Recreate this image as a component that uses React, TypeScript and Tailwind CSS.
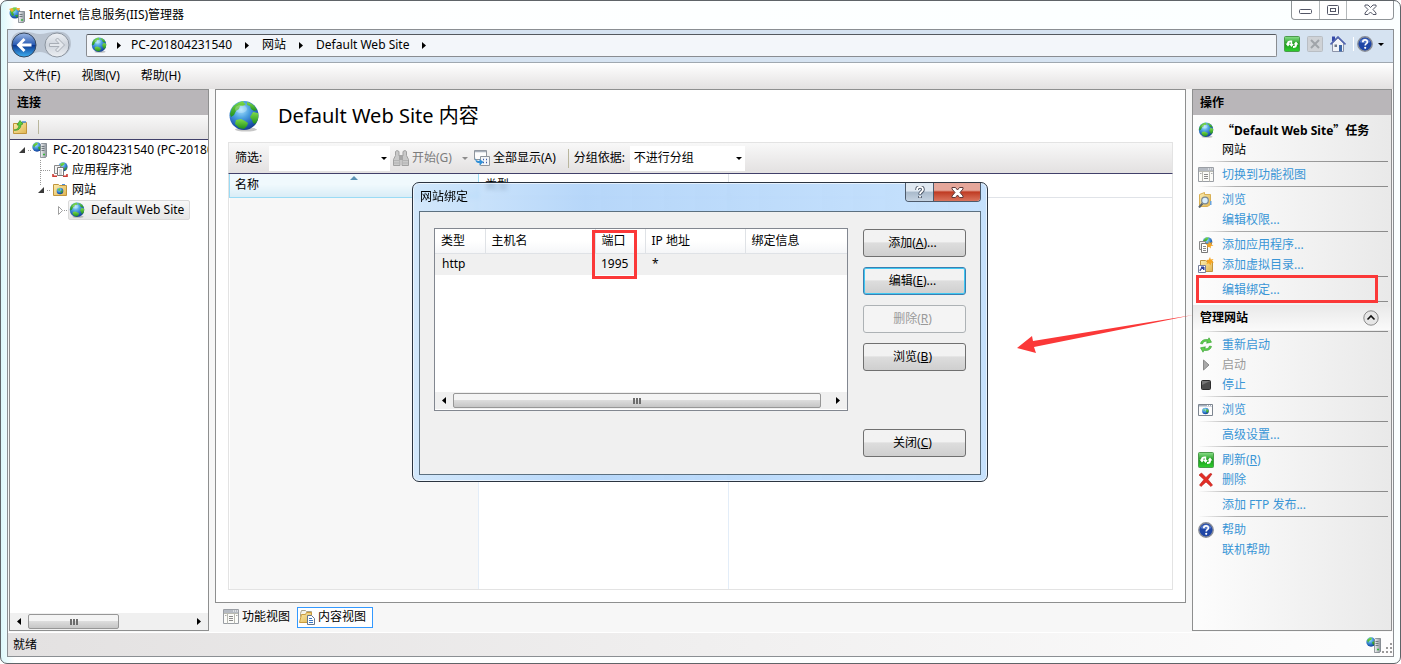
import type { ReactNode } from 'react';

type IconProps = { size?: number };

type Action = {
  label: ReactNode;
  icon?: ReactNode;
  disabled?: boolean;
};

// gradients shared by all the icons below
function IconDefs() {
  return (
    <svg width="0" height="0" className="absolute" aria-hidden="true">
      <defs>
        <radialGradient id="sea" cx="0.4" cy="0.3" r="0.75">
          <stop offset="0" stopColor="#a8e4ff" />
          <stop offset="0.4" stopColor="#4a9fe0" />
          <stop offset="0.8" stopColor="#1c55b0" />
          <stop offset="1" stopColor="#173a85" />
        </radialGradient>
        <linearGradient id="land" x1="0" y1="0" x2="0" y2="1">
          <stop offset="0" stopColor="#7fdc4a" />
          <stop offset="1" stopColor="#1f8f1c" />
        </linearGradient>
        <linearGradient id="folder" x1="0" y1="0" x2="1" y2="1">
          <stop offset="0" stopColor="#fdeeb0" />
          <stop offset="1" stopColor="#e0b450" />
        </linearGradient>
        <linearGradient id="refresh" x1="0" y1="0" x2="0" y2="1">
          <stop offset="0" stopColor="#8be08b" />
          <stop offset="0.5" stopColor="#1c9a1c" />
          <stop offset="1" stopColor="#2fd02f" />
        </linearGradient>
        <linearGradient id="back" x1="0" y1="0" x2="0" y2="1">
          <stop offset="0" stopColor="#9db9e4" />
          <stop offset="0.48" stopColor="#2a5cb4" />
          <stop offset="0.52" stopColor="#0d3a94" />
          <stop offset="1" stopColor="#3fb2f2" />
        </linearGradient>
        <linearGradient id="forward" x1="0" y1="0" x2="0" y2="1">
          <stop offset="0" stopColor="#eef1f5" />
          <stop offset="0.5" stopColor="#cfd5dd" />
          <stop offset="1" stopColor="#eceff3" />
        </linearGradient>
        <linearGradient id="server" x1="0" y1="0" x2="1" y2="0">
          <stop offset="0" stopColor="#f4f5f6" />
          <stop offset="1" stopColor="#8d959c" />
        </linearGradient>
      </defs>
    </svg>
  );
}

function Globe({ size = 16 }: IconProps) {
  return (
    <svg width={size} height={size} viewBox="0 0 32 32" className="shrink-0">
      <ellipse cx="18" cy="29.5" rx="11" ry="2" fill="#000" opacity="0.22" />
      <circle cx="16" cy="15.5" r="14.5" fill="url(#sea)" />
      <path d="M4 8C7 4 11 2 15 1l1 2 2 1-3 2-3 0-1 3-3 2-2 4-3 2-1-3z" fill="url(#land)" />
      <path d="M19 2c5 1 8 4 10 8l-3 1-3-2-1-3-3-1z" fill="url(#land)" />
      <path d="M25 12l5 1c1 4 0 8-3 11l-2-1-1-3-2-3z" fill="url(#land)" />
      <path d="M8 20l5-1 4 2 3 2-1 3-3 3-5-1-4-4z" fill="url(#land)" />
      <ellipse cx="13" cy="9" rx="6" ry="4" fill="#fff" opacity="0.25" />
    </svg>
  );
}

function ServerIcon({ size = 16 }: IconProps) {
  return (
    <svg width={size} height={size} viewBox="0 0 16 16" className="shrink-0">
      <circle cx="5" cy="5" r="4.7" fill="url(#sea)" />
      <path d="M1 3l3-2.5 2 .5-1 2-2 1-1 2zM6 5l3-1v3L7 8z" fill="url(#land)" />
      <path d="M8.500 2.500l1-1h5v13l-1 1h-5z" fill="url(#server)" stroke="#6c747b" strokeWidth="0.7" />
      <path d="M9.500 4.500h3M9.500 6.500h3M9.500 8.500h3" stroke="#5b636b" strokeWidth="0.8" />
      <path d="M11 12.500h2" stroke="#35b53a" strokeWidth="1.500" />
    </svg>
  );
}

function ManagerIcon() {
  return (
    <svg width="16" height="16" viewBox="0 0 16 16" className="shrink-0">
      <circle cx="6" cy="6" r="5.500" fill="url(#sea)" />
      <path d="M1 4l3-3.500h4L6 4 4 5 5 8 3 9zM6 8l3 0-1 3z" fill="url(#land)" />
      <path d="M0 2l3-1 2 2-2 2zM7 1l4 0-1 3-2-1z" fill="#f2b234" />
      <path d="M9.500 5.500l1-1h5v10l-1 1h-5z" fill="url(#server)" stroke="#6c747b" strokeWidth="0.7" />
      <path d="M10.500 7.500h3M10.500 9.500h3" stroke="#5b636b" strokeWidth="0.8" />
      <path d="M12 13h2" stroke="#35b53a" strokeWidth="1.500" />
    </svg>
  );
}

function AppPoolIcon() {
  return (
    <svg width="16" height="16" viewBox="0 0 16 16" className="shrink-0">
      <circle cx="11" cy="4.800" r="4.600" fill="url(#sea)" />
      <path d="M8 2l3-1.500 2 1-2 2-2 1zM12 7l3-2.500-1 4z" fill="url(#land)" />
      <path d="M2.500 3.500h6v8h-6z" fill="#f3f3f3" stroke="#8a8a8a" />
      <path d="M5.500 5.500h6v8h-6z" fill="#fff" stroke="#777" />
      <path d="M7 8h3M7 10h3M7 12h3" stroke="#999" strokeWidth="0.800" />
      <path d="M1 12v2.200h4M15 12v2.200h-4" fill="none" stroke="#cc3a33" strokeWidth="1.600" />
    </svg>
  );
}

function SitesIcon() {
  return (
    <svg width="16" height="16" viewBox="0 0 16 16" className="shrink-0">
      <path d="M1.500 2.500h5l1 1h7v10h-13z" fill="url(#folder)" stroke="#c0943c" />
      <path d="M10 2.500h3" stroke="#4b8fd8" />
      <circle cx="8" cy="9" r="3.300" fill="url(#sea)" />
      <path d="M5.500 8l2-2 1 1-1 2zM8.500 9l2-1v2l-1.500 1.500z" fill="url(#land)" />
    </svg>
  );
}

function FolderUpIcon() {
  return (
    <svg width="16" height="16" viewBox="0 0 16 16" className="shrink-0">
      <path d="M1.500 4.500h5l1-1h7v11h-13z" fill="url(#folder)" stroke="#c0943c" />
      <path d="M10 3h4" stroke="#4b8fd8" strokeWidth="1.500" />
      <path d="M2 11c3 0 5-2 5-5H5l3-4.500L11 5 9 5.500c0 4-3 6.500-7 5.500z" fill="#5ccf3f" stroke="#2e8f22" strokeWidth="0.700" />
    </svg>
  );
}

function GridIcon() {
  return (
    <svg width="16" height="16" viewBox="0 0 16 16" className="shrink-0">
      <path d="M0.500 0.500h15v14h-15z" fill="#fbfbf8" stroke="#9a9ea4" />
      <path d="M1 1h14v3H1z" fill="#b5bac2" />
      <path d="M10 2h1M12 2h1M14 2h1" stroke="#fff" />
      <path d="M1 4.500h14M4.500 4.500v10M11.500 4.500v10" stroke="#b9bab2" />
      <path d="M2 6.500h1.500M13 6.500h1.500" stroke="#aaa" />
      <path d="M6 7.500h4M6 9.500h4M6 11.500h4" stroke="#8a8a8a" />
    </svg>
  );
}

function ContentIcon() {
  return (
    <svg width="16" height="16" viewBox="0 0 16 16" className="shrink-0">
      <path d="M1.500 4.500l1-3h4l1 1h5v5h-11z" fill="#f4f4ee" stroke="#a9a48d" />
      <path d="M0.500 13.500l2-8h4l1-2h5v10z" fill="url(#folder)" stroke="#c99b3e" />
      <path d="M8.500 6.500h4l3 3v6h-7z" fill="#fff" stroke="#64758c" />
      <path d="M10 9.500h3M10 11.500h4M10 13.500h4" stroke="#3b78c4" />
    </svg>
  );
}

function ExploreIcon() {
  return (
    <svg width="16" height="16" viewBox="0 0 16 16" className="shrink-0">
      <path d="M1.500 2.500l5-2v2h6v10l-3 2h-8z" fill="url(#folder)" stroke="#d8b055" />
      <path d="M12 9h1.500v4H12z" fill="#6aa3dc" />
      <path d="M4.500 11.500L1 15.500" stroke="#5c6670" strokeWidth="2" />
      <circle cx="7" cy="8.500" r="3.300" fill="#d9efff" stroke="#7a8894" strokeWidth="1.200" />
    </svg>
  );
}

function AddAppIcon() {
  return (
    <svg width="16" height="16" viewBox="0 0 16 16" className="shrink-0">
      <circle cx="9.500" cy="5" r="4.800" fill="url(#sea)" />
      <path d="M5 4l3-3.500h3l-2 3-3 2z" fill="url(#land)" />
      <path d="M1.500 4.500h6v8h-6z" fill="#eee" stroke="#8a8a8a" />
      <path d="M3.500 6.500h6v9h-6z" fill="#fff" stroke="#777" />
      <path d="M5 9.500h3M5 11.500h3M5 13.500h3" stroke="#888" />
      <path d="M11 3.500l.8 2.500 2.700-1-1.300 2.300 2.300 1.200-2.700.5 0 2.500-1.800-1.700-2.200 1.200.9-2.500L7.500 7.200l2.700-.3z" fill="#f6a521" />
    </svg>
  );
}

function AddVirtualDirIcon() {
  return (
    <svg width="16" height="16" viewBox="0 0 16 16" className="shrink-0">
      <path d="M2.500 3.500h5l1 1h6v10h-12z" fill="url(#folder)" stroke="#c0943c" />
      <path d="M12 0l.8 2.500L15.500 2 14 4l2 1.500-2.700.3L12.500 8.500 11 6.200 8.500 7l1-2.500L8 3l2.700-.3z" fill="#f6a521" />
      <path d="M0.500 8.500h7v7h-7z" fill="#fff" stroke="#777f9b" />
      <path d="M2 14c0-2 1-3 3-3M3 10h3v3z" fill="#2c3f9e" stroke="#2c3f9e" />
    </svg>
  );
}

function RestartIcon() {
  return (
    <svg width="16" height="16" viewBox="0 0 16 16" className="shrink-0">
      <path d="M2.500 6.500C3.500 3 7 1.800 10 2.800L11 .8l2.500 4.400-5 1 .9-1.700C7 3.800 5 4.800 4.500 7z" fill="#5fcf4b" stroke="#2f9a2c" strokeWidth="0.600" />
      <path d="M13.500 9.500c-1 3.500-4.500 4.700-7.500 3.700l-1 2-2.500-4.400 5-1-.9 1.700c2.400.7 4.400-.3 4.900-2.500z" fill="#5fcf4b" stroke="#2f9a2c" strokeWidth="0.600" />
    </svg>
  );
}

function StartIcon() {
  return (
    <svg width="16" height="16" viewBox="0 0 16 16" className="shrink-0">
      <path d="M5.500 3L11 8l-5.500 5z" fill="#a9a9a9" stroke="#8a8a8a" />
    </svg>
  );
}

function StopIcon() {
  return (
    <svg width="16" height="16" viewBox="0 0 16 16" className="shrink-0">
      <rect x="3.500" y="3.500" width="9" height="9" rx="1" fill="#4c4c4c" stroke="#2c2c2c" />
      <path d="M4 8l8-4H4z" fill="#777" />
    </svg>
  );
}

function BrowseIcon() {
  return (
    <svg width="16" height="16" viewBox="0 0 16 16" className="shrink-0">
      <path d="M0.500 2.500h14v11h-14z" fill="#fdfdfd" stroke="#7d858f" />
      <path d="M1 3h13v1.500H1z" fill="#a5afbd" />
      <path d="M9 3.500h1M11 3.500h1M13 3.500h1" stroke="#fff" />
      <circle cx="7.500" cy="9" r="3.300" fill="url(#sea)" />
      <path d="M8 7l2.500 1v2l-2 1zM5 8l1.500-1 .5 2z" fill="url(#land)" />
    </svg>
  );
}

function RefreshIcon() {
  return (
    <svg width="16" height="16" viewBox="0 0 16 16" className="shrink-0">
      <rect x="0.500" y="0.500" width="15" height="15" rx="1" fill="url(#refresh)" stroke="#4c9a4c" />
      <path d="M4 10.500L1.500 7.500H3c0-2 1-3 4-3v2c-1.500 0-2 .2-2 1h1.500z" fill="#fff" />
      <path d="M7.500 4.500v5M6 8l1.500 2L9 8" fill="none" stroke="#fff" strokeWidth="1.300" />
      <path d="M12 5.500l2.500 3H13c0 2.500-1 3.500-4 3.500v-2c1.500 0 2-.4 2-1.500H9.500z" fill="#fff" />
    </svg>
  );
}

function StopLoadIcon() {
  return (
    <svg width="16" height="16" viewBox="0 0 16 16" className="shrink-0">
      <rect x="0.500" y="0.500" width="15" height="15" rx="1" fill="#cfd2d6" stroke="#b9bec4" />
      <path d="M4 4l8 8M12 4l-8 8" stroke="#a0a4a9" strokeWidth="2" />
    </svg>
  );
}

function HomeIcon() {
  return (
    <svg width="16" height="16" viewBox="0 0 16 16" className="shrink-0">
      <path d="M2 0.500h3v5H2z" fill="#3449a8" />
      <path d="M2.500 7v8.500h11V7L8 2z" fill="#f1f3f7" stroke="#8d94a8" />
      <path d="M0.500 8.500L8 1l7.500 7.500" fill="none" stroke="#5265b0" strokeWidth="1.600" />
      <path d="M9 9h3v6.500H9z" fill="#3c66a8" />
      <path d="M4.500 8.500h2.500v2.500H4.500z" fill="#6b7688" />
    </svg>
  );
}

function HelpIcon() {
  return (
    <svg width="16" height="16" viewBox="0 0 16 16" className="shrink-0">
      <circle cx="8" cy="8" r="7.200" fill="#1f46a6" stroke="#8b8f98" strokeWidth="1.400" />
      <path d="M2.500 6a6 6 0 0 1 11 0c-3 1.500-8 1.500-11 0z" fill="#6d8fd6" opacity="0.700" />
      <path d="M5.800 6.200c0-3 4.600-3 4.600-.2 0 1.700-2.200 1.700-2.200 3.500" fill="none" stroke="#fff" strokeWidth="1.700" />
      <circle cx="8.200" cy="11.800" r="1.100" fill="#fff" />
    </svg>
  );
}

function DeleteIcon() {
  return (
    <svg width="16" height="16" viewBox="0 0 16 16" className="shrink-0">
      <path d="M1 3l2.500-2 4.500 4.500L12 1.500 14 2l-4 5.500 4.500 5.500-1.500 1.500L8 10l-5 4.500L1.500 13 6 7.500z" fill="#e32d25" stroke="#b51a14" strokeWidth="0.600" />
    </svg>
  );
}

function BinocularsIcon() {
  return (
    <svg width="16" height="16" viewBox="0 0 16 16" className="shrink-0">
      <path d="M2.500 1.500L4 .5l2 1v4l1 1v9H.500v-6l2-4zM10 1.500l2-1 1.500 1v4l2 4v6H9v-9l1-1z" fill="#c9c9c9" stroke="#a1a1a1" />
      <path d="M6 5h4v5H6z" fill="#a6a6a6" />
      <path d="M1 10.500h5.500M9.500 10.500H15M1 13h5.500M9.500 13H15" stroke="#b3b3b3" />
    </svg>
  );
}

function ShowAllIcon() {
  return (
    <svg width="16" height="16" viewBox="0 0 16 16" className="shrink-0">
      <path d="M0.500 0.500h12v9h-12z" fill="#fdfdfd" stroke="#8f959c" />
      <path d="M1 1.500h11" stroke="#a9b1bc" strokeWidth="1.500" />
      <path d="M6.500 6.500h9v9h-9z" fill="#f3f5f8" stroke="#8f959c" />
      <path d="M9 9.500h1M12 9.500h1M9 12.500h1M12 12.500h1" stroke="#3d5fa8" strokeWidth="1.500" />
      <path d="M1.500 7c0 3 1 4 4 4V9l4 3-4 3.500V13C2 13 1 11 1.500 7z" fill="#2f8fd6" />
    </svg>
  );
}

function CollapseIcon() {
  return (
    <svg width="16" height="16" viewBox="0 0 16 16" className="shrink-0">
      <circle cx="8" cy="8" r="7.200" fill="#e6e6e6" stroke="#8b8b8b" />
      <path d="M4.500 9.500L8 6l3.500 3.500" fill="none" stroke="#111" strokeWidth="1.600" />
    </svg>
  );
}

function Caret({ dir, gray = false }: { dir: 'right' | 'left' | 'down'; gray?: boolean }) {
  const paths = { right: 'M2 1l4 3.500L2 8z', left: 'M6 1L2 4.500 6 8z', down: 'M1 3h6L4 6z' };
  return (
    <svg width="8" height="9" viewBox="0 0 8 9" className="shrink-0">
      <path d={paths[dir]} fill={gray ? '#8c8c8c' : '#000'} />
    </svg>
  );
}

function ScrollBar({ thumb, name }: { thumb: string; name: string }) {
  return (
    <div className="flex h-[17px] shrink-0 items-center bg-[#f0f0f0]">
      <button aria-label={`${name} left`} className="flex h-full w-[18px] items-center justify-center">
        <Caret dir="left" />
      </button>
      <div className="flex h-full flex-1 items-center">
        <div className={`flex h-[15px] items-center justify-center gap-px rounded-xs border border-[#979797] bg-linear-to-b from-[#f4f4f4] from-45% via-[#dcdcdc] via-50% to-[#c6c6c6] ${thumb}`}>
          <span className="h-1.5 w-0.5 bg-[#6d6d6d]" />
          <span className="h-1.5 w-0.5 bg-[#6d6d6d]" />
          <span className="h-1.5 w-0.5 bg-[#6d6d6d]" />
        </div>
      </div>
      <button aria-label={`${name} right`} className="flex h-full w-[18px] items-center justify-center">
        <Caret dir="right" />
      </button>
    </div>
  );
}

function TitleBar() {
  return (
    <header className="flex h-7 shrink-0 justify-between pl-0.5">
      <div className="flex items-center gap-1 text-black">
        <ManagerIcon />
        <h1>Internet 信息服务(IIS)管理器</h1>
      </div>
      <div className="flex h-[19px] rounded-b-[4px] border border-t-0 border-[#8f9497] bg-white">
        <button aria-label="最小化" className="flex w-7 items-center justify-center border-r border-[#b4b8ba] pt-1">
          <svg width="13" height="6" viewBox="0 0 13 6"><rect x="0.500" y="0.500" width="12" height="4" rx="1" fill="#fff" stroke="#535666" /></svg>
        </button>
        <button aria-label="最大化" className="flex w-[27px] items-center justify-center border-r border-[#b4b8ba]">
          <svg width="12" height="11" viewBox="0 0 12 11"><rect x="0.500" y="0.500" width="11" height="9" rx="1" fill="#fff" stroke="#535666" /><rect x="3.500" y="3.500" width="5" height="3" fill="#fff" stroke="#535666" /></svg>
        </button>
        <button aria-label="关闭" className="flex w-[46px] items-center justify-center">
          <svg width="13" height="12" viewBox="0 0 13 12"><path d="M1 1h3l2.500 2.500L9 1h3v1.500L9 5.500l3 3.500v1.500H9L6.500 8 4 10.500H1V9l3-3.500-3-3z" fill="#fff" stroke="#535666" /></svg>
        </button>
      </div>
    </header>
  );
}

function NavBar() {
  const crumbs = ['PC-201804231540', '网站', 'Default Web Site'];
  return (
    <nav className="flex h-8 shrink-0 items-center bg-[#d6e3f1] pr-2 pb-0.5">
      <svg width="78" height="30" viewBox="0 0 78 30" className="shrink-0">
        <path d="M12 2c8-2 14 2 20 2s14-4 22-2c6 1 9 6 9 12s-5 13-14 13c-8 0-10-5-17-5s-9 5-16 5C8 27 3 21 3 14S6 3 12 2z" fill="#b9c3d0" />
        <circle cx="16" cy="15" r="12" fill="url(#back)" stroke="#36475f" />
        <path d="M8.500 15l7-7 2 2-3.500 3.500h9.500v3H14l3.500 3.500-2 2z" fill="#fff" />
        <circle cx="49" cy="15" r="12" fill="url(#forward)" stroke="#8c95a0" />
        <path d="M56.500 15l-7-7-2 2 3.500 3.500h-9.500v3H51l-3.500 3.500 2 2z" fill="#e3e7ec" stroke="#a8aeb6" />
      </svg>
      <div className="flex h-[23px] flex-1 items-center rounded-xs border border-[#898c91] border-t-[#54585e] bg-[#f3f6fa] pl-1">
        <Globe />
        <span className="flex w-6 justify-center"><Caret dir="right" /></span>
        {crumbs.map((c) => (
          <div key={c} className="flex items-center">
            <a href="#">{c}</a>
            <span className="flex w-[30px] justify-center"><Caret dir="right" /></span>
          </div>
        ))}
      </div>
      <div className="flex items-center gap-[7px] pb-0.5 pl-[7px]">
        <button aria-label="刷新"><RefreshIcon /></button>
        <button aria-label="停止" disabled><StopLoadIcon /></button>
        <button aria-label="主页"><HomeIcon /></button>
        <span className="h-3.5 w-px bg-white" />
        <button aria-label="帮助" className="-ml-1 flex items-center gap-1"><HelpIcon /><Caret dir="down" /></button>
      </div>
    </nav>
  );
}

function MenuBar() {
  const menus = ['文件(F)', '视图(V)', '帮助(H)'];
  return (
    <div className="flex h-[27px] shrink-0 items-center gap-[21px] border-t border-[#a0a8b0] bg-linear-to-b from-white to-[#e3e1e1] pl-[15px]">
      {menus.map((m) => (
        <button key={m}>{m}</button>
      ))}
    </div>
  );
}

function ConnectionsPanel() {
  return (
    <aside className="flex w-[200px] shrink-0 flex-col border border-[#8e8f8f] bg-white">
      <h2 className="h-[25px] shrink-0 bg-[#b9b6b9] px-[7px] leading-[25px] font-bold">连接</h2>
      <div className="flex h-[25px] shrink-0 items-center gap-2.5 border-b border-[#41406a] bg-linear-to-b from-[#f8f8f8] to-[#e3e1e1] pl-0.5">
        <button aria-label="连接到"><FolderUpIcon /></button>
        <span className="h-3.5 w-px bg-[#b9b69c]" />
      </div>
      <ul className="flex-1 overflow-hidden whitespace-nowrap">
        <li className="flex h-5 items-center">
          <svg width="22" height="20" viewBox="0 0 22 20" className="shrink-0">
            <path d="M15 7v6H9z" fill="#3a3a3a" />
            <path d="M18 10.500h4" stroke="#999" strokeDasharray="1 1" />
          </svg>
          <ServerIcon />
          <span className="pl-[5px]">PC-201804231540 (PC-201804231540\Administrator)</span>
        </li>
        <li className="flex h-5 items-center">
          <svg width="42" height="20" viewBox="0 0 42 20" className="shrink-0">
            <path d="M30.500 0v20M31 10.500h10" stroke="#999" strokeDasharray="1 1" />
          </svg>
          <AppPoolIcon />
          <span className="pl-1">应用程序池</span>
        </li>
        <li className="flex h-5 items-center">
          <svg width="42" height="20" viewBox="0 0 42 20" className="shrink-0">
            <path d="M30.500 0v6M37 10.500h4" stroke="#999" strokeDasharray="1 1" />
            <path d="M34 7v6h-6z" fill="#3a3a3a" />
          </svg>
          <SitesIcon />
          <span className="pl-1">网站</span>
        </li>
        <li className="flex h-5 items-center">
          <svg width="58" height="20" viewBox="0 0 58 20" className="shrink-0">
            <path d="M48.500 6.500l4 4-4 4z" fill="#fff" stroke="#a0a0a0" />
            <path d="M54 10.500h4" stroke="#999" strokeDasharray="1 1" />
          </svg>
          <a href="#" className="flex h-5 items-center rounded-xs border border-[#d9d9d9] bg-linear-to-b from-[#f8f8f8] to-[#e6e6e6] pr-[5px]">
            <Globe />
            <span className="pl-1.5">Default Web Site</span>
          </a>
        </li>
      </ul>
      <ScrollBar thumb="w-[91px]" name="tree" />
    </aside>
  );
}

function ContentPanel() {
  return (
    <main className="flex min-w-0 flex-1 flex-col">
      <section className="flex flex-1 flex-col border border-[#8e8f8f] bg-white px-3 pb-3">
        <div className="flex h-[52px] shrink-0 items-center gap-[18px]">
          <Globe size={32} />
          <h2 className="text-[20px] leading-6">Default Web Site 内容</h2>
        </div>

        <div className="flex h-8 shrink-0 items-center border-x border-t border-[#e3e3e3] border-b border-b-[#41406a] bg-linear-to-b from-[#f8f8f8] to-[#e3e1e1] pl-1.5 whitespace-nowrap">
          <label htmlFor="filter" className="w-[34px]">筛选:</label>
          <div className="relative">
            <select id="filter" aria-label="筛选" className="h-[25px] w-[121px] appearance-none bg-white px-1" />
            <span className="pointer-events-none absolute top-2 right-0.5"><Caret dir="down" /></span>
          </div>
          <button disabled className="ml-[3px] flex items-center gap-[3px] text-[#7c7c7c]"><BinocularsIcon />开始(G)</button>
          <span className="flex w-[22px] justify-center pl-1"><Caret dir="down" gray /></span>
          <button className="flex items-center gap-[3px]"><ShowAllIcon />全部显示(A)</button>
          <span className="mr-[5px] ml-3 h-[19px] w-px bg-[#b9b69c]" />
          <label htmlFor="group" className="w-[56px]">分组依据:</label>
          <div className="relative">
            <select id="group" className="h-[25px] w-[115px] appearance-none bg-white px-1">
              <option>不进行分组</option>
            </select>
            <span className="pointer-events-none absolute top-2 right-0.5"><Caret dir="down" /></span>
          </div>
        </div>

        <div className="flex flex-1 border border-t-0 border-[#e3e3e3]">
          <table className="h-full w-full table-fixed border-collapse text-left">
            <thead>
              <tr className="h-[23px]">
                <th className="relative w-[249px] border border-t-0 border-[#9adbf5] bg-linear-to-b from-[#f0f9fd] from-45% to-[#d9ecf6] pl-[5px] font-normal">
                  名称
                  <svg width="8" height="4" viewBox="0 0 8 4" className="absolute top-0.5 left-[120px]"><path d="M0 4l4-4 4 4z" fill="#5b93b5" /></svg>
                </th>
                <th className="w-[250px] border-r border-b border-[#e0e3e8] pl-1.5 font-normal">类型</th>
                <th className="border-b border-[#e0e3e8]" />
              </tr>
            </thead>
            <tbody>
              <tr>
                <td className="border-r border-[#e3edf8] bg-[#f7f7f7]" />
                <td className="border-r border-[#e3edf8]" />
                <td />
              </tr>
            </tbody>
          </table>
        </div>
      </section>

      <div className="flex h-7 shrink-0 items-center gap-[7px] pl-2">
        <button className="flex items-center gap-[3px]"><GridIcon />功能视图</button>
        <button className="flex h-[21px] items-center gap-[3px] border border-[#3399ff] bg-white pr-1.5 pl-px"><ContentIcon />内容视图</button>
      </div>
    </main>
  );
}

function ActionGroup({ actions }: { actions: Action[] }) {
  return (
    <ul>
      {actions.map((a, i) => (
        <li key={i} className="flex h-5 items-center gap-2">
          <span className="flex w-4 shrink-0">{a.icon}</span>
          {a.disabled ? <span className="text-[#9a9a9a]">{a.label}</span> : <a href="#" className="text-[#3a96d6]">{a.label}</a>}
        </li>
      ))}
    </ul>
  );
}

function Separator() {
  return (
    <div className="-mr-0.5 flex h-[5px] items-start">
      <div className="h-px flex-1 translate-y-px bg-linear-to-r from-transparent via-[#a9a9a9] via-20% to-[#8b8b8b]" />
    </div>
  );
}

function ActionsPanel() {
  const siteGroups: Action[][] = [
    [{ label: '切换到功能视图', icon: <GridIcon /> }],
    [{ label: '浏览', icon: <ExploreIcon /> }, { label: '编辑权限...' }],
    [{ label: '添加应用程序...', icon: <AddAppIcon /> }, { label: '添加虚拟目录...', icon: <AddVirtualDirIcon /> }],
    [{ label: '编辑绑定...' }],
  ];
  const manageGroups: Action[][] = [
    [
      { label: '重新启动', icon: <RestartIcon /> },
      { label: '启动', icon: <StartIcon />, disabled: true },
      { label: '停止', icon: <StopIcon /> },
    ],
    [{ label: '浏览', icon: <BrowseIcon /> }],
    [{ label: '高级设置...' }],
    [{ label: <>刷新(<u>R</u>)</>, icon: <RefreshIcon /> }, { label: '删除', icon: <DeleteIcon /> }],
    [{ label: '添加 FTP 发布...' }],
    [{ label: '帮助', icon: <HelpIcon /> }, { label: '联机帮助' }],
  ];

  return (
    <aside className="w-[200px] shrink-0 border border-[#8e8f8f] bg-linear-to-r from-[#fdfdfd] to-[#e9e9e9]">
      <h2 className="h-[25px] bg-[#b9b6b9] px-[7px] leading-[25px] font-bold">操作</h2>
      <div className="px-[5px] pt-[5px]">
        <div className="flex h-5 items-center gap-2 whitespace-nowrap">
          <Globe />
          <h3 className="font-bold">
            <span className="font-['Noto_Sans_CJK_SC',sans-serif]">“</span>
            Default Web Site
            <span className="font-['Noto_Sans_CJK_SC',sans-serif]">”</span>
            任务
          </h3>
        </div>
        <p className="h-5 pl-6 leading-5">网站</p>
        {siteGroups.map((g, i) => (
          <div key={i}>
            <Separator />
            <ActionGroup actions={g} />
          </div>
        ))}
        <Separator />
        <div className="-mx-[5px] flex h-[25px] items-center justify-between bg-linear-to-b from-[#e9e9e9] to-[#fafafa] pr-3 pl-[7px]">
          <h3 className="font-bold">管理网站</h3>
          <button aria-label="折叠"><CollapseIcon /></button>
        </div>
        {manageGroups.map((g, i) => (
          <div key={i}>
            <Separator />
            <ActionGroup actions={g} />
          </div>
        ))}
      </div>
    </aside>
  );
}

function StatusBar() {
  return (
    <footer className="flex h-6 shrink-0 items-center justify-between border-t border-white bg-linear-to-r from-[#e3e1e1] to-[#fdfdfd] pl-[5px]">
      <span>就绪</span>
      <div className="flex items-end">
        <ServerIcon />
        <svg width="11" height="11" viewBox="0 0 11 11">
          <path d="M8 1h2v2H8zM4 5h2v2H4zM8 5h2v2H8zM0 9h2v2H0zM4 9h2v2H4zM8 9h2v2H8z" fill="#9a9a9a" />
        </svg>
      </div>
    </footer>
  );
}

function DialogButton({ children, focused = false, disabled = false }: { children: ReactNode; focused?: boolean; disabled?: boolean }) {
  let look = 'border-[#707070] bg-linear-to-b from-[#f2f2f2] from-45% via-[#dddddd] via-50% to-[#cfcfcf]';
  if (focused) look = 'border-[#3c7fb1] inset-ring inset-ring-[#3fc8f2] bg-linear-to-b from-[#f2f2f2] from-45% via-[#dddddd] via-50% to-[#cfcfcf]';
  if (disabled) look = 'border-[#adb2b5] bg-[#f4f4f4] text-[#9a9a9a]';
  return (
    <button disabled={disabled} className={`h-7 w-[103px] rounded-[3px] border pr-1 ${look}`}>
      {children}
    </button>
  );
}

function BindingsDialog() {
  return (
    <div role="dialog" aria-label="网站绑定" className="absolute top-[181px] left-[411px] flex h-[300px] w-[576px] flex-col rounded-[7px] border border-[#2b3440] bg-linear-to-r from-[#c9e3fb]/80 via-[#a5cdf8]/80 via-30% to-[#bcdcfc]/85 px-1.5 pb-1.5 inset-ring inset-ring-white/60 backdrop-blur-[2px]">
      <div className="flex h-7 shrink-0 items-start justify-between">
        <h2 className="pl-px leading-[27px]">网站绑定</h2>
        <div className="flex h-[19px] overflow-hidden rounded-b-[4px] border border-t-0 border-[#4d5a6b]">
          <button aria-label="帮助" className="flex w-7 items-center justify-center border-r border-[#4d5a6b] bg-linear-to-b from-[#dfe8f1] from-45% via-[#a9bacb] via-50% to-[#c5d3e2]">
            <svg width="10" height="13" viewBox="0 0 10 13">
              <path d="M2 4c0-4 6-4 6-.5C8 6 5 5.500 5 8.500M5 10v2" fill="none" stroke="#4a5566" strokeWidth="3.600" />
              <path d="M2 4c0-4 6-4 6-.5C8 6 5 5.500 5 8M5 10v1.500" fill="none" stroke="#fff" strokeWidth="1.800" />
            </svg>
          </button>
          <button aria-label="关闭" className="flex w-[46px] items-center justify-center bg-linear-to-b from-[#e5a79b] from-40% via-[#bf3a22] via-50% to-[#d9735c]">
            <svg width="13" height="11" viewBox="0 0 13 11"><path d="M1 .5h3.500l2 2.500 2-2.500H12v1.500L9 5.500l3 3.500v1.500H8.500l-2-2.500-2 2.500H1V9l3-3.500-3-3.500z" fill="#fff" stroke="#5d3a3a" /></svg>
          </button>
        </div>
      </div>

      <div className="flex flex-1 gap-[15px] border border-[#5c7080] bg-[#f0f0f0] pt-4 pl-3.5">
        <div className="flex h-[183px] w-[414px] flex-col border border-[#828790] bg-white pb-px">
          <div className="flex-1">
            <table className="w-full table-fixed border-collapse text-left">
              <thead>
                <tr className="h-6 bg-linear-to-b from-white from-50% to-[#f5f6f8]">
                  <th className="w-[50px] border-r border-b border-[#dfe2e6] pl-1.5 font-normal">类型</th>
                  <th className="w-[110px] border-r border-b border-[#dfe2e6] pl-1.5 font-normal">主机名</th>
                  <th className="w-[50px] border-r border-b border-[#dfe2e6] pl-1.5 font-normal">端口</th>
                  <th className="w-[100px] border-r border-b border-[#dfe2e6] pl-1.5 font-normal">IP 地址</th>
                  <th className="border-b border-[#dfe2e6] pl-1.5 font-normal">绑定信息</th>
                </tr>
              </thead>
              <tbody>
                <tr className="h-[22px] bg-[#f0f0f0]">
                  <td className="pl-[7px]">http</td>
                  <td />
                  <td className="pl-1.5">1995</td>
                  <td className="pl-[7px]">*</td>
                  <td />
                </tr>
              </tbody>
            </table>
          </div>
          <ScrollBar thumb="mr-2 w-full" name="bindings" />
        </div>

        <div className="flex flex-col justify-between pt-px pb-[17px]">
          <div className="flex flex-col gap-2.5">
            <DialogButton>添加(<u>A</u>)...</DialogButton>
            <DialogButton focused>编辑(<u>E</u>)...</DialogButton>
            <DialogButton disabled>删除(<u>R</u>)</DialogButton>
            <DialogButton>浏览(<u>B</u>)</DialogButton>
          </div>
          <DialogButton>关闭(<u>C</u>)</DialogButton>
        </div>
      </div>
    </div>
  );
}

// red boxes and the arrow that point from the action to the dialog
function Annotations() {
  return (
    <>
      <div className="pointer-events-none absolute top-[229px] left-[591px] h-[49px] w-[45px] border-3 border-[#fb3838]" />
      <div className="pointer-events-none absolute top-[274px] right-[22px] h-7 w-[182px] border-3 border-[#fb3838]" />
      <svg width="176" height="40" viewBox="0 0 176 40" className="pointer-events-none absolute top-[314px] right-[207px]">
        <path d="M176 0L16 26l-1-5L0 33l19 5-2-6z" fill="#fb3838" />
      </svg>
    </>
  );
}

export default function App() {
  return (
    <div className="relative flex h-screen min-h-[640px] w-full flex-col overflow-hidden rounded-[7px] border border-[#5f6468] bg-linear-to-r from-[#dcf8fb] via-white via-1% to-[#fbffff] px-1.5 pb-1.5 font-['Noto_Sans','Noto_Sans_CJK_SC',sans-serif] text-[12px] leading-4 text-black">
      <IconDefs />
      <TitleBar />
      <div className="flex min-h-0 flex-1 flex-col border border-[#8b8f93] bg-[#f7f7f7]">
        <NavBar />
        <MenuBar />
        <div className="flex min-h-0 flex-1 gap-1.5 px-px pb-px">
          <ConnectionsPanel />
          <ContentPanel />
          <ActionsPanel />
        </div>
        <StatusBar />
      </div>
      <BindingsDialog />
      <Annotations />
    </div>
  );
}
